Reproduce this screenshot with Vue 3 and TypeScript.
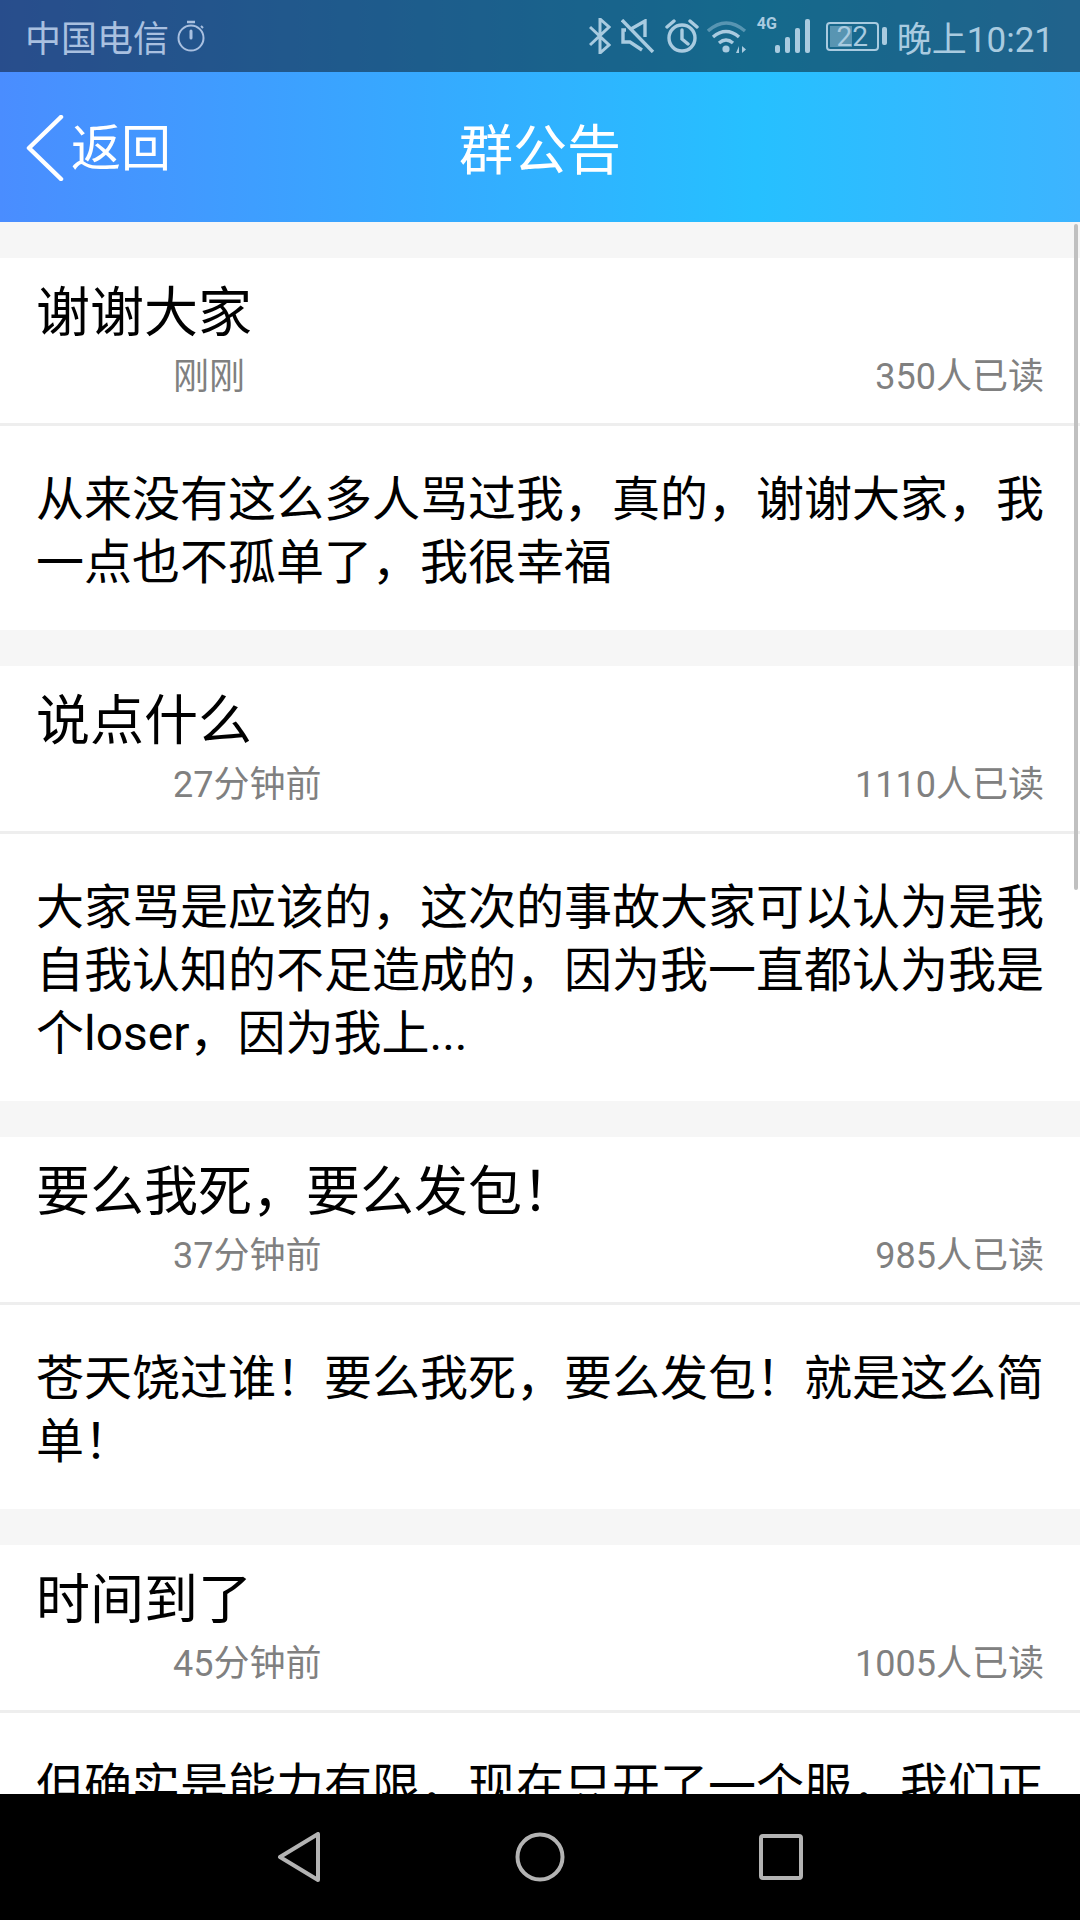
<script setup lang="ts">
interface Notice { title: string; time: string; reads: string; body: string }
const notices: Notice[] = [
  { title: '谢谢大家', time: '刚刚', reads: '350人已读', body: '从来没有这么多人骂过我，真的，谢谢大家，我一点也不孤单了，我很幸福' },
  { title: '说点什么', time: '27分钟前', reads: '1110人已读', body: '大家骂是应该的，这次的事故大家可以认为是我自我认知的不足造成的，因为我一直都认为我是个loser，因为我上...' },
  { title: '要么我死，要么发包！', time: '37分钟前', reads: '985人已读', body: '苍天饶过谁！要么我死，要么发包！就是这么简单！' },
  { title: '时间到了', time: '45分钟前', reads: '1005人已读', body: '但确实是能力有限，现在只开了一个服，我们正在努力' }
]
</script>

<template>
  <div class="screen">
    <div class="top">
      <div class="status">
        <div class="left">
          <span>中国电信</span>
          <svg width="28" height="32" viewBox="0 0 28 32" fill="none" stroke="currentColor" stroke-width="2"><circle cx="14" cy="18" r="12.5"/><path d="M10 2h8" stroke-width="2.5"/><path d="M14 11v7" stroke-width="3" stroke-linecap="round"/><path d="M24 6l2 2"/></svg>
        </div>
        <div class="right">
          <svg width="22" height="36" viewBox="0 0 22 36" fill="none" stroke="currentColor" stroke-width="3"><path d="M1 9l19 18-9 8V1l9 8L1 27"/></svg>
          <svg width="34" height="34" viewBox="0 0 34 34" fill="none" stroke="currentColor" stroke-width="3.4"><path d="M1 1l31 32"/><path d="M5 11H2v12h7l12 8M10 10L24 2v16"/></svg>
          <svg width="34" height="34" viewBox="0 0 34 34" fill="none" stroke="currentColor" stroke-width="3.4"><circle cx="17" cy="19" r="13"/><path d="M17 11v9l6 5M2 8l7-6M32 8l-7-6" stroke-linecap="round"/></svg>
          <svg class="wifi" width="40" height="33" viewBox="0 0 40 33"><g fill="none" stroke="currentColor" stroke-width="3.4"><path d="M1 11Q19-5 38 11" opacity=".45"/><path d="M6 17Q19 6 32 17"/><path d="M12 23Q19 17 26 23"/></g><circle cx="19" cy="29" r="3.6" fill="currentColor"/><path d="M29 33l3-7v7zM35 26l4 3.5-4 3.5z" fill="currentColor"/></svg>
          <div class="signal">
            <span class="lte">4G</span>
            <svg width="35" height="34" viewBox="0 0 35 34" fill="currentColor"><rect x="0" y="26" width="5" height="8" rx="2"/><rect x="10" y="18" width="5" height="16" rx="2"/><rect x="20" y="9" width="5" height="25" rx="2"/><rect x="30" y="0" width="5" height="34" rx="2"/></svg>
          </div>
          <div class="battery-wrap">
            <div class="battery"><i class="fill"></i><b>22</b></div>
            <i class="cap"></i>
          </div>
          <span class="clock">晚上10:21</span>
        </div>
      </div>
      <div class="nav">
        <div class="back">
          <svg width="38" height="66" viewBox="0 0 38 66" fill="none" stroke="#fff" stroke-width="4.5" stroke-linecap="round" stroke-linejoin="round"><path d="M35 2L3 33l32 31"/></svg>
          <span>返回</span>
        </div>
        <div class="heading">群公告</div>
      </div>
    </div>
    <div class="list">
      <div class="scrollbar"></div>
      <section v-for="n in notices" :key="n.title" class="card">
        <header class="head">
          <h2>{{ n.title }}</h2>
          <div class="meta"><span>{{ n.time }}</span><span>{{ n.reads }}</span></div>
        </header>
        <p class="body">{{ n.body }}</p>
      </section>
    </div>
    <div class="keys">
      <svg width="44" height="50" viewBox="0 0 44 50" fill="none" stroke="#b3b3b3" stroke-width="4" stroke-linejoin="round"><path d="M41 2v46L3 25z"/></svg>
      <svg width="50" height="50" viewBox="0 0 50 50" fill="none" stroke="#b3b3b3" stroke-width="4"><circle cx="25" cy="25" r="22.5"/></svg>
      <svg width="44" height="46" viewBox="0 0 44 46" fill="none" stroke="#b3b3b3" stroke-width="4" stroke-linejoin="round"><rect x="2" y="2" width="40" height="42" rx="2"/></svg>
    </div>
  </div>
</template>

<style>
body { margin: 0; }
</style>

<style scoped>
.screen {
  width: 1080px;
  height: 1920px;
  display: flex;
  flex-direction: column;
  overflow: hidden;
  background: #f6f6f6;
  font-family: Roboto, "Noto Sans CJK SC", sans-serif;
}
.top { background: linear-gradient(90deg, #4a8dff 0%, #26c0ff 70%, #3db4ff 100%); }
.status {
  height: 72px;
  box-sizing: border-box;
  padding: 0 26px 0 25px;
  display: flex;
  align-items: center;
  justify-content: space-between;
  background: rgba(0, 0, 0, 0.45);
  color: #a9cbe0;
}
.left, .right { display: flex; align-items: center; }
.left { font-size: 36px; gap: 8px; color: #a9c0e0; }
.right { gap: 10px; }
.wifi { margin-left: -2px; }
.signal { position: relative; display: flex; padding-left: 18px; }
.lte { position: absolute; left: 0; top: -3px; font-size: 16px; line-height: 16px; font-weight: 700; }
.battery-wrap { display: flex; align-items: center; gap: 3px; margin-left: 6px; }
.battery {
  position: relative;
  width: 53px;
  height: 29px;
  box-sizing: border-box;
  border: 2px solid currentColor;
  border-radius: 4px;
  text-align: center;
  font-size: 28px;
  line-height: 25px;
}
.fill { position: absolute; left: 2px; top: 2px; bottom: 2px; width: 22px; background: rgba(169, 203, 224, 0.45); }
.battery b { position: relative; font-weight: 400; }
.cap { width: 5px; height: 18px; border-radius: 2px; background: currentColor; }
.clock { font-size: 35px; }
.nav {
  height: 150px;
  position: relative;
  display: flex;
  align-items: center;
  justify-content: center;
  color: #fff;
}
.back {
  position: absolute;
  left: 26px;
  top: 41px;
  display: flex;
  align-items: center;
  gap: 7px;
  font-size: 50px;
  line-height: 66px;
}
.back span { padding-top: 3px; }
.heading { font-size: 54px; padding-bottom: 2px; }
.list {
  flex: 1;
  min-height: 0;
  overflow: hidden;
  position: relative;
  padding-top: 36px;
  display: flex;
  flex-direction: column;
  gap: 36px;
}
.scrollbar {
  position: absolute;
  right: 2px;
  top: 2px;
  width: 4px;
  height: 666px;
  background: #c0c0c0;
  border-radius: 2px;
}
.card { background: #fff; flex: none; }
.head {
  height: 168px;
  box-sizing: border-box;
  padding: 20px 36px 0;
  border-bottom: 3px solid #eeeeee;
}
h2 {
  margin: 0;
  font-size: 54px;
  font-weight: 400;
  line-height: 72px;
  color: #000;
}
.meta {
  display: flex;
  justify-content: space-between;
  padding-left: 137px;
  font-size: 36px;
  line-height: 48px;
  margin-top: 3px;
  color: #808080;
}
.body {
  margin: 0;
  padding: 42px 36px 36px;
  font-size: 48px;
  line-height: 63px;
  color: #000;
}
.keys {
  height: 126px;
  flex: none;
  background: #000;
  display: flex;
  align-items: center;
  justify-content: center;
  gap: 194px;
}
</style>
